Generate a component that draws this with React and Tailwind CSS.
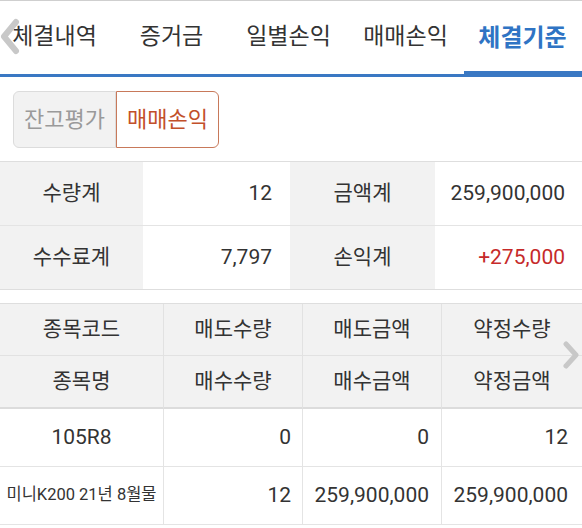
import React from "react";

const tabs = ["체결내역", "증거금", "일별손익", "매매손익", "체결기준"];

const font = "font-['Roboto','Noto_Sans_CJK_KR',sans-serif]";

const App = () => {
  return (
    <div className={`relative w-[582px] h-[528px] overflow-hidden bg-white text-[#333] ${font}`}>
      {/* tab bar */}
      <div className="relative border-t border-[#cfcfcf]">
        <div className="flex ml-[-4px] h-[73px]">
          {tabs.map((t, i) => (
            <div
              key={t}
              className={`w-[117px] shrink-0 flex items-center justify-center ${
                i === 4 ? "text-[#2f74c4] font-bold text-[24px]" : "text-[#333] text-[23px]"
              }`}
            >
              {t}
            </div>
          ))}
        </div>
        <div className="h-[3px] bg-[#3a78c3]" />
        <div className="absolute left-[464px] right-0 top-[70px] h-[6px] bg-[#3a78c3]" />
        <svg className="absolute left-0 top-[17px]" width="20" height="37" viewBox="0 0 20 37">
          <path d="M16 4 L4 18.5 L16 33" fill="none" stroke="#c8c8c8" strokeWidth="6" strokeLinecap="round" strokeLinejoin="round" />
        </svg>
      </div>

      {/* segment toggle */}
      <div className="flex ml-[13px] mt-[14px] h-[57px] w-[206px] text-[22px]">
        <div className="flex-1 flex items-center justify-center bg-[#f2f2f2] text-[#9a9a9a] border border-[#dcdcdc] rounded-l-[6px]">
          잔고평가
        </div>
        <div className="flex-1 flex items-center justify-center bg-white text-[#c2502a] border border-[#c8795a] rounded-r-[6px]">
          매매손익
        </div>
      </div>

      {/* summary */}
      <div className="mt-[13px] border-t border-b border-[#dedede] grid grid-cols-[143px_147px_145px_147px] text-[21px]">
        <div className="h-[64px] bg-[#f2f2f2] flex items-center justify-center border-b border-[#e4e4e4]">수량계</div>
        <div className="h-[64px] flex items-center justify-end pr-[18px] border-b border-[#e4e4e4]">12</div>
        <div className="h-[64px] bg-[#f2f2f2] flex items-center justify-center border-b border-[#e4e4e4]">금액계</div>
        <div className="h-[64px] flex items-center justify-end pr-[17px] border-b border-[#e4e4e4]">259,900,000</div>
        <div className="h-[63px] bg-[#f2f2f2] flex items-center justify-center">수수료계</div>
        <div className="h-[63px] flex items-center justify-end pr-[18px]">7,797</div>
        <div className="h-[63px] bg-[#f2f2f2] flex items-center justify-center">손익계</div>
        <div className="h-[63px] flex items-center justify-end pr-[17px] text-[#c62a2a]">+275,000</div>
      </div>

      {/* detail table */}
      <div className="mt-[13px] border-t border-[#dedede] grid grid-cols-[164px_139px_139px_140px] text-[21px]">
        {["종목코드", "매도수량", "매도금액", "약정수량"].map((h, i) => (
          <div key={h} className={`h-[52px] bg-[#f2f2f2] flex items-center justify-center border-b border-[#e2e2e2] ${i < 3 ? "border-r" : ""}`}>
            {h}
          </div>
        ))}
        {["종목명", "매수수량", "매수금액", "약정금액"].map((h, i) => (
          <div key={h} className={`h-[53px] bg-[#f2f2f2] flex items-center justify-center border-b-2 border-[#dcdcdc] ${i < 3 ? "border-r border-r-[#e2e2e2]" : ""}`}>
            {h}
          </div>
        ))}
        <div className="h-[58px] flex items-center justify-center border-r border-b border-[#e4e4e4]">105R8</div>
        <div className="h-[58px] flex items-center justify-end pr-[11px] border-r border-b border-[#e4e4e4]">0</div>
        <div className="h-[58px] flex items-center justify-end pr-[12px] border-r border-b border-[#e4e4e4]">0</div>
        <div className="h-[58px] flex items-center justify-end pr-[14px] border-b border-[#e4e4e4]">12</div>
        <div className="h-[58px] flex items-center justify-center border-r border-b border-[#e4e4e4] text-[16.5px]">미니K200 21년 8월물</div>
        <div className="h-[58px] flex items-center justify-end pr-[11px] border-r border-b border-[#e4e4e4]">12</div>
        <div className="h-[58px] flex items-center justify-end pr-[12px] border-r border-b border-[#e4e4e4]">259,900,000</div>
        <div className="h-[58px] flex items-center justify-end pr-[14px] border-b border-[#e4e4e4]">259,900,000</div>
      </div>

      <svg className="absolute left-[562px] top-[341px]" width="19" height="28" viewBox="0 0 19 28">
        <path d="M4 3 L14 14 L4 25" fill="none" stroke="#c8c8c8" strokeWidth="5" strokeLinecap="round" strokeLinejoin="round" />
      </svg>
    </div>
  );
};

export default App;
